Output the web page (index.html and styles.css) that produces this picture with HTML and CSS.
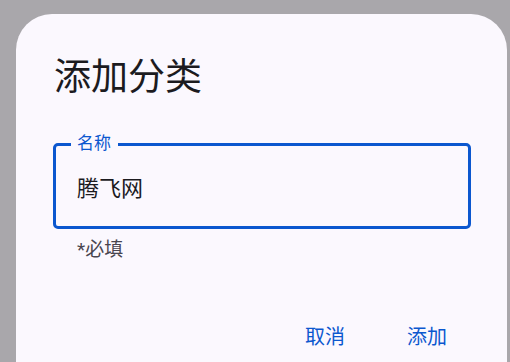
FILE: index.html
```html
<!DOCTYPE html>
<html lang="zh">
<head>
<meta charset="utf-8">
<title>添加分类</title>
<link rel="stylesheet" href="styles.css">
</head>
<body>
<div class="dialog">
  <h1 class="title">添加分类</h1>
  <div class="field">
    <span class="field-label">名称</span>
    <span class="field-value">腾飞网</span>
  </div>
  <div class="helper">*必填</div>
  <div class="actions">
    <button class="btn">取消</button>
    <button class="btn">添加</button>
  </div>
</div>
</body>
</html>
```
FILE: styles.css
```css
html, body {
  margin: 0;
  padding: 0;
  height: 100%;
  overflow: hidden;
}
body {
  background: #a9a7ab;
  font-family: Roboto, "Noto Sans CJK SC", sans-serif;
}
.dialog {
  margin: 14px 0 0 16px;
  width: 491px;
  height: 348px;
  box-sizing: border-box;
  background: #fbf8fe;
  border-radius: 36px 36px 0 0;
  padding: 42px 36px 0 37px;
}
.title {
  margin: 0 0 0 1px;
  font-size: 37px;
  font-weight: 400;
  line-height: 44px;
  color: #1c1b1f;
}
.field {
  position: relative;
  margin-top: 43px;
  height: 86px;
  box-sizing: border-box;
  border: 3px solid #0b57cf;
  border-radius: 5px;
  display: flex;
  align-items: center;
  padding-left: 21px;
}
.field-label {
  position: absolute;
  left: 15px;
  top: -14px;
  padding: 0 7px 0 6px;
  background: #fbf8fe;
  font-size: 17px;
  line-height: 22px;
  color: #0b57cf;
}
.field-value {
  font-size: 22px;
  color: #1c1b1f;
}
.helper {
  margin: 9px 0 0 24px;
  font-size: 19px;
  line-height: 24px;
  color: #49454f;
}
.actions {
  display: flex;
  justify-content: flex-end;
  gap: 14px;
  margin-top: 53px;
}
.btn {
  border: 0;
  background: none;
  padding: 0 24px;
  height: 40px;
  font-family: Roboto, "Noto Sans CJK SC", sans-serif;
  font-size: 20px;
  color: #0b57cf;
}
```
